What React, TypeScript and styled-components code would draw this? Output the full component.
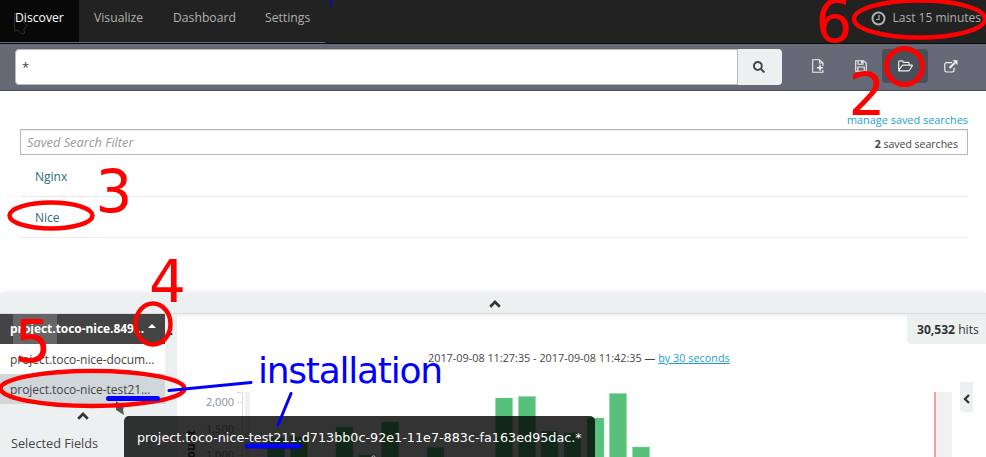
import React from 'react';
import styled, { createGlobalStyle } from 'styled-components';
import { FaSearch } from 'react-icons/fa';

const Global = createGlobalStyle`
  * { box-sizing: border-box; }
  body { margin: 0; background: #fff; overflow: hidden; }
`;
const Page = styled.div`
  position: relative; width: 986px; height: 457px; overflow: hidden;
  display: flex; flex-direction: column; color: #444;
  font: 13px/18px 'Open Sans', 'Noto Sans', sans-serif;
`;
const Navbar = styled.nav`
  height: 44px; flex: none; display: flex; justify-content: space-between;
  background: #222; border-bottom: 1px solid #080808; color: #b0b0b0; font-size: 12px;
`;
const Tabs = styled.div`display: flex; width: 325px; height: 43px; border-bottom: 1px solid #656a76;`;
const Tab = styled.div<{ $w: number; $active?: boolean }>`
  width: ${p => p.$w}px; padding: 9px 0 0 15px; font-size: 12.2px;
  background: ${p => (p.$active ? '#080808' : 'transparent')};
  color: ${p => (p.$active ? '#fff' : '#b0b0b0')};
`;
const TimePicker = styled.div`display: flex; gap: 7px; padding: 9px 5px 0 0; white-space: nowrap; svg { margin-top: 2px; }`;
const QueryBar = styled.div`
  height: 47px; flex: none; display: flex; align-items: flex-start; padding: 5px 12px 0 15px;
  background: #656a76; border-bottom: 1px solid #4b4f5c;
`;
const Query = styled.div`
  width: 723px; height: 36px; padding: 8px 6px; background: #fff;
  border: 1px solid #b7bcbf; border-radius: 4px 0 0 4px;
`;
const SearchButton = styled.div`
  width: 44px; height: 36px; display: flex; align-items: center; justify-content: center;
  background: #ecf0f1; border-radius: 0 4px 4px 0; color: #444; padding-right: 2px;
`;
const Actions = styled.div`display: flex; margin-left: 15px;`;
const Action = styled.div<{ $w: number; $active?: boolean }>`
  width: ${p => p.$w}px; height: 34px; display: flex; align-items: center; justify-content: center;
  color: #eee; border-radius: 4px; background: ${p => (p.$active ? '#4b4f5a' : 'transparent')};
`;
const Saved = styled.section`height: 202px; flex: none; padding: 20px 18px 0 20px;`;
const Manage = styled.div`height: 18px; text-align: right; color: #1a9fd0; font-size: 10.9px;`;
const Filter = styled.div`
  height: 26px; margin-bottom: 1px; display: flex; justify-content: space-between; align-items: center;
  border: 1px solid #b4b8b8; padding: 0 9px 0 6px; font-size: 12.8px; box-shadow: inset 0 1px 1px #eee;
  i { color: #999; }
  span { font-size: 10.5px; padding-top: 3px; }
`;
const SavedRow = styled.div`height: 41px; padding: 12px 15px; border-bottom: 1px solid #ececec; color: #286d7a; font-size: 12px;`;
const Collapse = styled.div`
  height: 21px; flex: none; display: flex; justify-content: center; align-items: center; padding: 2px 0 0 3px;
  background: #ecf0f1; border-bottom: 1px solid #d8dcdc; box-shadow: 0 0 6px #e3e3e3; color: #333;
`;
const Body = styled.div`height: 143px; display: flex;`;
const Sidebar = styled.aside`width: 177px; flex: none; background: #ecf0f1; padding-right: 12px;`;
const IndexRow = styled.div<{ $kind?: 'head' | 'hover' }>`
  height: 30px; padding: ${p => (p.$kind === 'head' ? '6px 10px' : '7px 10px 5px')};
  white-space: nowrap; display: flex; gap: 4px; align-items: center;
  font-size: 12px; letter-spacing: -0.05px;
  font-weight: ${p => (p.$kind === 'head' ? 700 : 400)};
  color: ${p => (p.$kind === 'head' ? '#fff' : '#444')};
  background: ${p => (p.$kind === 'head' ? 'linear-gradient(90deg, #444 13px, #666 13px, #666 57px, #444 57px)' : p.$kind === 'hover' ? '#cfd7db' : '#fff')};
`;
const Caret = styled.span`border: 4px solid transparent; border-top: 0; border-bottom-color: #fff; margin-top: -7px;`;
const Fold = styled.div`height: 24px; display: flex; justify-content: center; align-items: center; color: #333;`;
const FieldsTitle = styled.div`padding: 6px 11px; font-size: 12.7px; line-height: 18px;`;
const Main = styled.main`flex: 1; display: grid; grid-template-rows: 30px 48px 65px; min-width: 0;`;
const Hits = styled.div`
  width: 79px; height: 30px; justify-self: end; padding: 7px 10px; white-space: nowrap; font-size: 12.1px;
  background: #ecf0f1; border-radius: 0 0 0 5px; color: #333;
`;
const Range = styled.div`padding: 5px 0 0 251px; font-size: 10.85px; white-space: nowrap; a { color: #1a9fd0; text-decoration: underline; }`;
const ChartArea = styled.div`display: flex;`;
const Chart = styled.svg`width: 783px; height: 65px; flex: none; overflow: hidden; font-size: 11px;`;
const SideToggle = styled.div`
  width: 13px; height: 30px; margin-top: -10px; padding: 3px 0 0; display: flex; align-items: center; justify-content: center;
  background: #ecf0f1; border-radius: 0 0 0 4px; color: #333;
`;
const Tooltip = styled.div`
  position: absolute; left: 124px; top: 416px; width: 471px; height: 45px; padding: 13px 13px 12px; border-radius: 5px;
  background: rgba(0, 0, 0, 0.8); color: #fff; white-space: nowrap;
  font: 12.75px/18px 'DejaVu Sans', sans-serif;
`;
const Overlay = styled.svg`
  position: absolute; left: 0; top: 0; width: 986px; height: 457px; pointer-events: none;
  font-family: 'DejaVu Sans', sans-serif;
`;

const Chevron = () => (
  <svg width="12" height="8" viewBox="0 0 12 8" fill="none" stroke="currentColor" strokeWidth="2.7"><path d="M1.2 6.7 6 2l4.8 4.7" /></svg>
);
const ChevronSide = () => (
  <svg width="7" height="10" viewBox="0 0 7 10" fill="none" stroke="currentColor" strokeWidth="2.3"><path d="M6 1 2 5l4 4" /></svg>
);
const Clock = () => (
  <svg width="15" height="15" viewBox="0 0 15 15" fill="none" stroke="currentColor"><circle cx="7.5" cy="7.5" r="6" strokeWidth="2" /><path d="M8 4v4.5H5" strokeWidth="1.2" /></svg>
);
const NewFile = () => (
  <svg width="12" height="14" viewBox="0 0 12 14" fill="none" stroke="currentColor" strokeWidth="1.1"><path d="M11 7V4L7.5.7H.7v12.6H11V11M7.5.7V4H11" /><path d="M8 5.8v6M5 8.8h6" strokeWidth="1.6" /></svg>
);
const Save = () => (
  <svg width="12" height="12" viewBox="0 0 12 12" fill="none" stroke="currentColor" strokeWidth="1.1"><path d="M.7.7h8l2.6 2.6v8H.7zM3 .7v3.5h5V.7M2.8 11.3V7h6.4v4.3" /><path d="M6.8 1v2.5" strokeWidth="1.6" /></svg>
);
const Open = () => (
  <svg width="15" height="12" viewBox="0 0 15 12" fill="none" stroke="currentColor" strokeWidth="1.2" strokeLinejoin="round"><path d="M.7 9.7V2Q.7.9 1.8.9h2.4q1 0 1 1.4h5q1 0 1 1.2v1.6M.8 10.4l3-4.4q.6-.8 1.5-.8H14q.6 0 .2.7L11.6 10q-.6.9-1.6.9H1.2q-.7 0-.4-.5Z" /></svg>
);
const Share = () => (
  <svg width="14" height="13" viewBox="0 0 14 13" fill="none" stroke="currentColor"><path d="M8 2.7H2.6Q.8 2.7.8 4.4v5.9q0 1.7 1.8 1.7h5.7q1.8 0 1.8-1.7V7.8" strokeWidth="1.2" /><path d="m5.5 8 5.3-5.3" strokeWidth="2" /><path d="M8.5.2h5v5z" fill="currentColor" stroke="none" /></svg>
);

const bars = [[267.5, 438], [290.5, 437], [336, 427], [359, 455], [381.5, 422], [427, 447.5], [495.5, 398], [518.5, 396.5], [541, 431], [564, 433], [587, 418], [609.5, 393.5], [632.5, 447]];
const ticks: [number, string][] = [[402.5, '2,000'], [429.5, '1,500'], [455.5, '1,000']];

export default function App() {
  return (
    <Page>
      <Global />
      <Navbar>
        <Tabs>
          <Tab $w={79} $active>Discover</Tab><Tab $w={79}>Visualize</Tab><Tab $w={92}>Dashboard</Tab><Tab $w={75}>Settings</Tab>
        </Tabs>
        <TimePicker><Clock />Last 15 minutes</TimePicker>
      </Navbar>
      <QueryBar>
        <Query>*</Query>
        <SearchButton><FaSearch size={12} /></SearchButton>
        <Actions>
          <Action $w={42}><NewFile /></Action>
          <Action $w={43}><Save /></Action>
          <Action $w={46} $active><Open /></Action>
          <Action $w={45}><Share /></Action>
        </Actions>
      </QueryBar>
      <Saved>
        <Manage>manage saved searches</Manage>
        <Filter><i>Saved Search Filter</i><span><b>2</b> saved searches</span></Filter>
        <SavedRow>Nginx</SavedRow><SavedRow>Nice</SavedRow>
      </Saved>
      <Collapse><Chevron /></Collapse>
      <Body>
        <Sidebar>
          <IndexRow $kind="head">project.toco-nice.849...<Caret /></IndexRow>
          <IndexRow>project.toco-nice-docum...</IndexRow>
          <IndexRow $kind="hover">project.toco-nice-test21...</IndexRow>
          <Fold><Chevron /></Fold>
          <FieldsTitle>Selected Fields</FieldsTitle>
        </Sidebar>
        <Main>
          <Hits><b>30,532</b> hits</Hits>
          <Range>2017-09-08 11:27:35 - 2017-09-08 11:42:35 — <a>by 30 seconds</a></Range>
          <ChartArea>
            <Chart viewBox="177 392 783 65">
              <rect x="245" y="392" width="5" height="66" fill="#f1f1f1" />
              <rect x="936" y="392" width="16" height="66" fill="#f1f1f1" />
              <rect x="934" y="392" width="2" height="66" fill="#eba3a5" />
              <path d="M237 392.5h5.5V458" fill="none" stroke="#ddd" />
              {ticks.map(([y, label]) => (
                <g key={label}><path d={`M237 ${y}h5`} stroke="#ddd" /><text x="234" y={y + 3.5} textAnchor="end" fill="#848e96">{label}</text></g>
              ))}
              <text transform="translate(195 430) rotate(-90)" textAnchor="end" fontSize="12" fontWeight="700" fill="#444">Count</text>
              {bars.map(([x, y]) => <rect key={x} x={x} y={y} width="17" height={460 - y} fill="#57c17b" stroke="#8bd5a4" strokeWidth=".5" />)}
            </Chart>
            <SideToggle><ChevronSide /></SideToggle>
          </ChartArea>
        </Main>
      </Body>
      <Tooltip>project.toco-nice-test211.d713bb0c-92e1-11e7-883c-fa163ed95dac.*</Tooltip>
      <Overlay>
        <path d="M14.5 13v18l3.5-.5 4 3.5 2.5-1-.5-4 3-3.5L14.5 13" fill="none" stroke="#555" strokeWidth=".5" />
        <path d="M171 328v2M171 333v2" stroke="#333" strokeWidth="2.5" />
        <path d="M116 401l4 3 5-1-2 7 1 5-8-5z" fill="#555" />
        <circle cx="373.5" cy="457.500" r="1.7" fill="none" stroke="#bbb" />
        <g fill="none" stroke="red" strokeWidth="4.5">
          <ellipse cx="919.5" cy="19" rx="65.5" ry="18.5" />
          <circle cx="904.5" cy="66.5" r="18" strokeWidth="5" />
          <ellipse cx="51" cy="215.5" rx="41.5" ry="13" />
          <ellipse cx="153" cy="324" rx="17.5" ry="20.5" />
          <ellipse cx="92.5" cy="388.5" rx="92" ry="17.5" />
        </g>
        <g fill="red" fontSize="58">
          <text x="815.5" y="42">6</text>
          <text x="848.5" y="115">2</text>
          <text x="95.5" y="212">3</text>
          <text x="149" y="302">4</text>
          <text x="14.5" y="362">5</text>
        </g>
        <g fill="none" stroke="#00f" strokeLinecap="round">
          <path d="M331.5 0 330.5 6" strokeWidth="1.3" />
          <path d="M169 390.5 251 382.5M291 393.5 278 425" strokeWidth="3" />
          <path d="M108.5 398.5H157.5M247.5 446H299" strokeWidth="5" />
        </g>
        <text x="258" y="383" fontSize="36" letterSpacing="-1.25" fill="#00f">installation</text>
      </Overlay>
    </Page>
  );
}
